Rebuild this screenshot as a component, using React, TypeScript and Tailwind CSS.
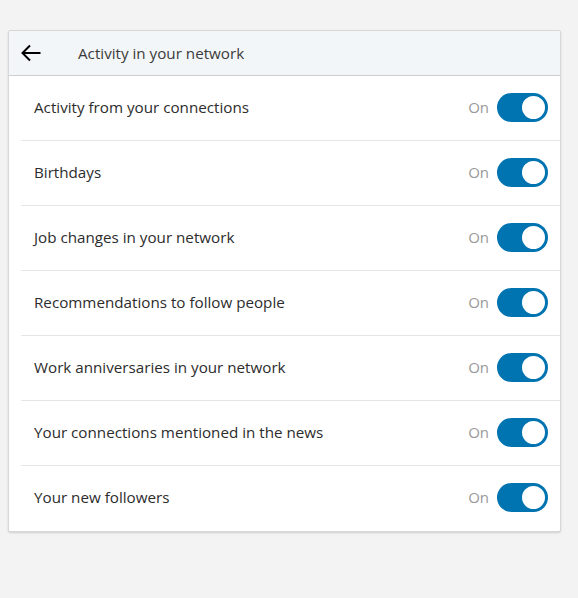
const ROWS = [
  "Activity from your connections",
  "Birthdays",
  "Job changes in your network",
  "Recommendations to follow people",
  "Work anniversaries in your network",
  "Your connections mentioned in the news",
  "Your new followers",
];

function Toggle() {
  return (
    <div className="flex h-[29px] w-[51px] items-center justify-end rounded-full bg-[#0073b1] p-[1px]">
      <div className="h-[27px] w-[27px] rounded-full border-2 border-[#0073b1] bg-white" />
    </div>
  );
}

export default function App() {
  return (
    <div className="min-h-[598px] w-full bg-[#f3f3f3] pt-[30px] pl-2 font-['Open_Sans','Noto_Sans',sans-serif]">
      <div className="w-[553px] overflow-hidden rounded-[2px] border border-[#d8d8d8] bg-white shadow-[0_1px_2px_rgba(0,0,0,0.15)]">
        <div className="flex h-[45px] items-center border-b border-[#cfcfcf] bg-[#f3f6f8]">
          <svg className="ml-3 h-[18px] w-[20px]" viewBox="0 0 20 18" fill="none" stroke="#000" strokeWidth="2">
            <path d="M1.5 9H19.5" />
            <path d="M9 1.5L1.5 9L9 16.5" />
          </svg>
          <span className="ml-[37px] text-[15.2px] text-[#3a3a3a]">Activity in your network</span>
        </div>
        <div className="pl-3">
          {ROWS.map((label, i) => (
            <div
              key={label}
              className={`flex h-[65px] items-center pr-3 pb-[2px] ${i < ROWS.length - 1 ? "border-b border-[#e6e6e6]" : ""}`}
            >
              <span className="ml-[13px] flex-1 text-[15.2px] text-[#2c2c2c]">{label}</span>
              <span className="mr-2 text-[15px] text-[#999]">On</span>
              <Toggle />
            </div>
          ))}
        </div>
      </div>
    </div>
  );
}
